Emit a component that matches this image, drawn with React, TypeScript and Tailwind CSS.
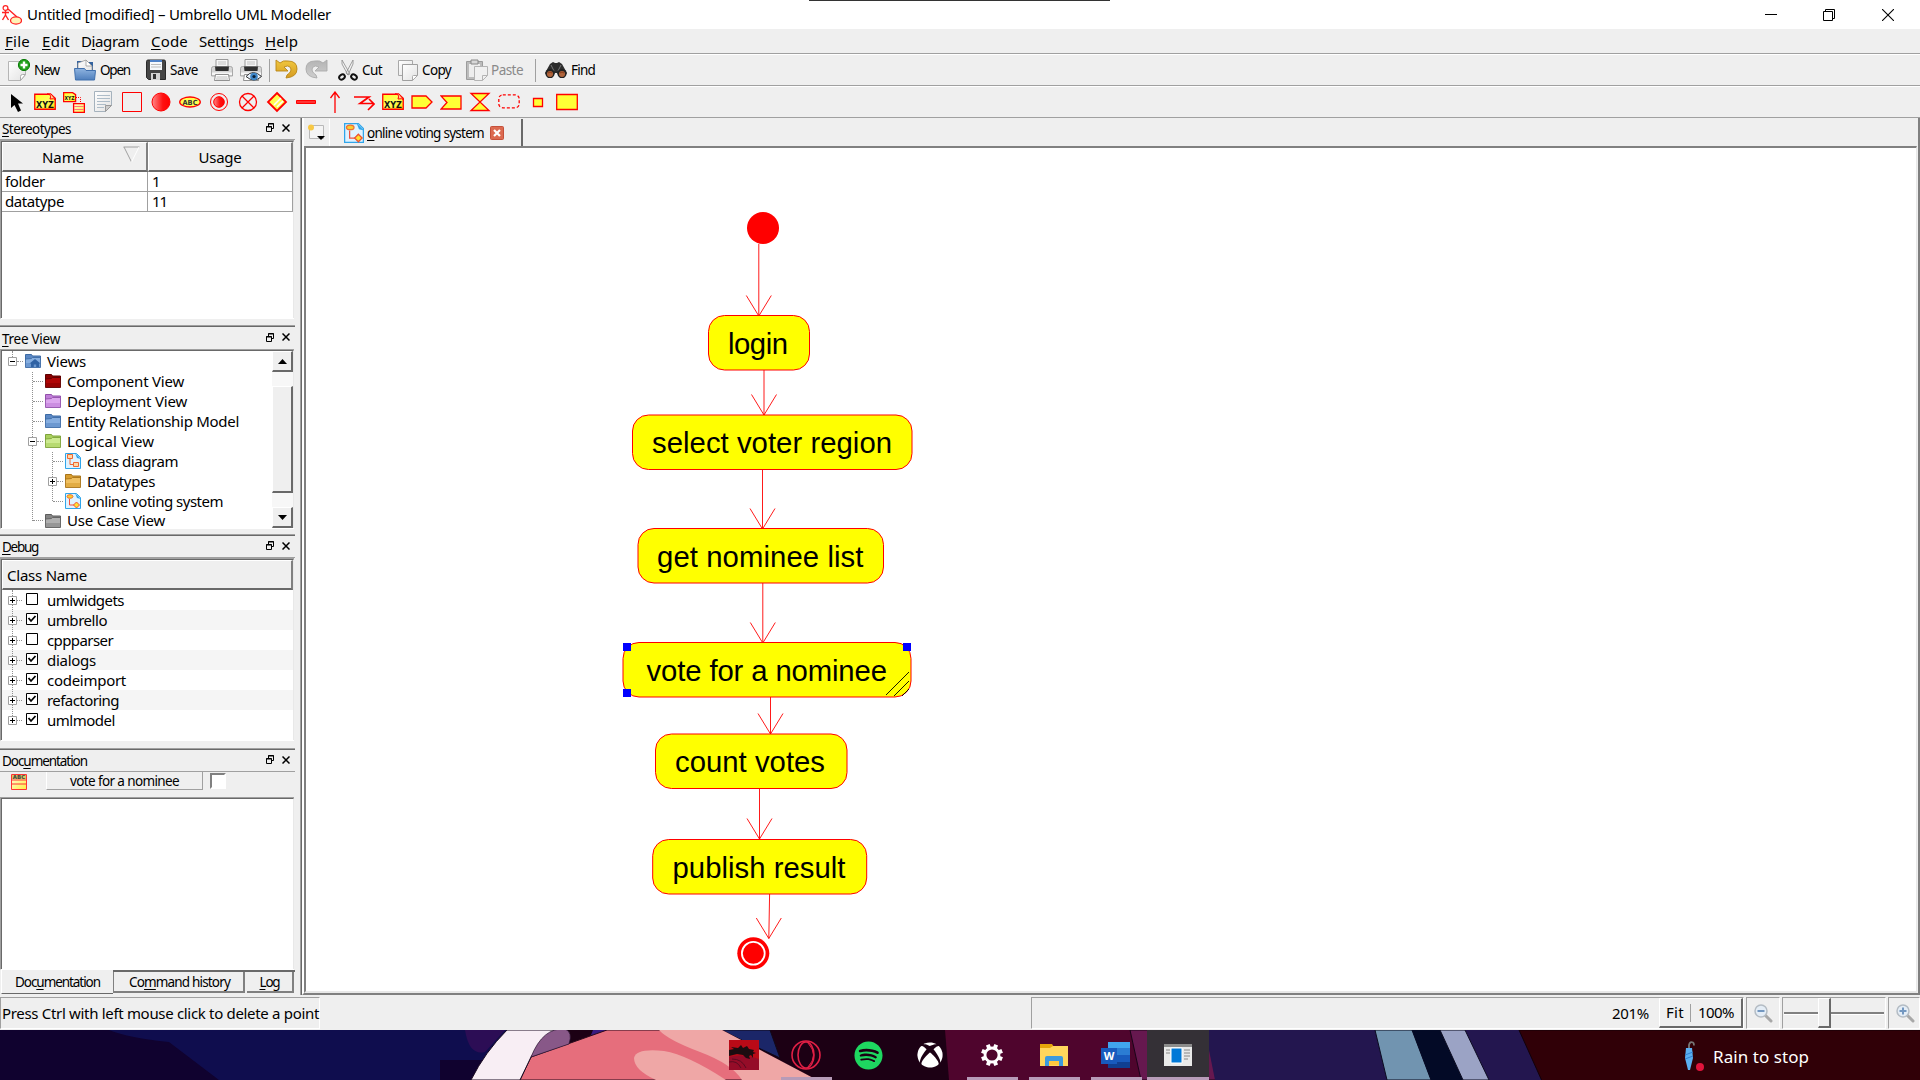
import React, { useLayoutEffect, useRef, useState } from "react";
import { FaSpotify, FaXbox } from "react-icons/fa";

const UI = "font-['Noto_Sans',sans-serif]";

/** Text whose tracking is adjusted so that it fills exactly `w` pixels. `u` is the index of the mnemonic letter. */
function Fit({ t, w, u = -1, c = "" }: { t: string; w: number; u?: number; c?: string }) {
  const ref = useRef<HTMLSpanElement>(null);
  const [ls, setLs] = useState(0);
  useLayoutEffect(() => {
    const el = ref.current;
    if (el && ls === 0) setLs((w - el.getBoundingClientRect().width) / t.length);
  }, []);
  return (
    <span ref={ref} className={"inline-block whitespace-pre " + c} style={{ letterSpacing: ls }}>
      {u < 0 ? t : (<>{t.slice(0, u)}<span className="underline underline-offset-2 decoration-1">{t[u]}</span>{t.slice(u + 1)}</>)}
    </span>
  );
}

const Svg = ({ s = 22, h, vb, children, c = "" }: { s?: number; h?: number; vb?: string; children: React.ReactNode; c?: string }) => (
  <svg width={s} height={h ?? s} viewBox={vb ?? "0 0 22 22"} className={"block shrink-0 " + c} fill="none">{children}</svg>
);

const Gradients = () => (
  <svg width="0" height="0" className="absolute">
    <defs>
      <linearGradient id="paper" x1="0" y1="0" x2="1" y2="1"><stop offset="0" stopColor="#fff" /><stop offset="1" stopColor="#e2e2e2" /></linearGradient>
      <linearGradient id="blue" x1="0" y1="0" x2="0" y2="1"><stop offset="0" stopColor="#8fb4e0" /><stop offset="1" stopColor="#4f7fbd" /></linearGradient>
      <linearGradient id="gold" x1="0" y1="0" x2="0" y2="1"><stop offset="0" stopColor="#f0c840" /><stop offset="1" stopColor="#d59a20" /></linearGradient>
      <linearGradient id="grey" x1="0" y1="0" x2="0" y2="1"><stop offset="0" stopColor="#b4b4b4" /><stop offset="1" stopColor="#cfcfcf" /></linearGradient>
      <linearGradient id="red" x1="0" y1="0" x2="1" y2="0"><stop offset="0" stopColor="#ff8a8a" /><stop offset=".6" stopColor="#ff1010" /><stop offset="1" stopColor="#f00" /></linearGradient>
      <linearGradient id="yel" x1="0" y1="0" x2="1" y2="1"><stop offset="0" stopColor="#ffff20" /><stop offset=".5" stopColor="#ffff60" /><stop offset="1" stopColor="#ffe000" /></linearGradient>
      <linearGradient id="cream" x1="0" y1="0" x2="1" y2="1"><stop offset="0" stopColor="#fffde0" /><stop offset="1" stopColor="#ffee40" /></linearGradient>
    </defs>
  </svg>
);

/* ---------- main toolbar icons ---------- */
const NewIcon = () => (
  <Svg><path d="M.5 2.500h17v13l-5 6H.5z" fill="url(#paper)" stroke="#b5b5b5" /><path d="M12.500 21.500v-4q0-2 2-2h3z" fill="#fff" stroke="#aaa" /><circle cx="16" cy="6" r="5.600" fill="#22a11c" stroke="#0c7d0a" /><path d="M16 2.500v7M12.500 6h7" stroke="#fff" strokeWidth="2.400" /></Svg>
);
const OpenIcon = () => (
  <Svg><path d="M3 2h5l1 1h10v12H3z" fill="#34639f" /><path d="M4 13V4l8-3 6 6v6z" fill="url(#paper)" stroke="#999" strokeWidth=".8" /><path d="M12 1v6h6z" fill="#fff" stroke="#999" strokeWidth=".8" /><path d="M.5 9.500h10l1.500 2h9.500l-1 9.500H1.500z" fill="url(#blue)" stroke="#4170ad" /></Svg>
);
const SaveIcon = () => (
  <Svg s={20} h={22} vb="0 0 20 22"><path d="M.5 2.500q0-1.500 1.500-1.500h16q1.500 0 1.500 1.500v18h-17l-2-2z" fill="#454545" stroke="#292929" /><path d="M4 1h12v10H4z" fill="#f5f8fc" /><path d="M4 1h12v2H4z" fill="#4c80c8" /><path d="M5 5.500h10M5 8h10" stroke="#bbb" /><path d="M5 14h9v7H5z" fill="#d5d5d5" /><path d="M7 15h3v5H7z" fill="#333" /></Svg>
);
const Printer = ({ eye = false }: { eye?: boolean }) => (
  <Svg><path d="M5 9V.5h12V9" fill="#f6f6f6" stroke="#999" /><path d="M7 3h8M7 5h8" stroke="#c2c2c2" /><path d="M.5 9.500q0-2 2-2h17q2 0 2 2V17H.5z" fill="#d4d4d4" stroke="#9a9a9a" strokeWidth=".8" /><path d="M4 7.500h14l-.5 4.500h-13z" fill="#303030" /><path d="M1 13.500h20v2.500H1z" fill="#f6f6f6" /><path d="M4.500 15.500h13l1 6h-15z" fill="#fff" stroke="#777" strokeWidth=".8" />
    {eye ? <><path d="M6 17.500q7-8 15.500 0-7.500 7-15.500 0z" fill="#e7f0fa" stroke="#333" /><circle cx="14" cy="17.500" r="3.800" fill="#3f86c6" /><circle cx="14" cy="17.500" r="1.600" fill="#0c1e33" /></> : <path d="M5.500 18h11M5 20h12" stroke="#bbb" />}
  </Svg>
);
const Undo = ({ redo = false }: { redo?: boolean }) => (
  <Svg s={23} h={22} vb="0 0 23 22" c={redo ? "-scale-x-100" : ""}>
    <path d="M1 1v11h12l-4-4q4-2 6 0 3 4-3 8l-1 3q11-1 11-9T13 2Q8 1 5 4z" fill={redo ? "url(#grey)" : "url(#gold)"} stroke={redo ? "#aaa" : "#b98717"} strokeWidth=".9" />
  </Svg>
);
const CutIcon = () => (
  <Svg s={20} h={22} vb="0 0 20 22"><path d="M4 1l8 14-2 1L4 5zM15 1L8 14l2 2 5-11z" fill="#f2f2f2" stroke="#8a8a8a" strokeWidth=".8" /><ellipse cx="4" cy="18" rx="3" ry="2.300" stroke="#111" strokeWidth="2" transform="rotate(-35 4 18)" /><ellipse cx="16" cy="18" rx="3" ry="2.300" stroke="#111" strokeWidth="2" transform="rotate(35 16 18)" /></Svg>
);
const CopyIcon = () => (
  <Svg s={20} h={22} vb="0 0 20 22"><path d="M.5 1.500h14v15H.5z" fill="url(#paper)" stroke="#a8a8a8" /><path d="M4.500 5.500h15v11l-5 5h-10z" fill="url(#paper)" stroke="#9f9f9f" /><path d="M14.500 21.500v-4q0-1 1-1h4z" fill="#fff" stroke="#aaa" /></Svg>
);
const PasteIcon = () => (
  <Svg><path d="M.5 2.500h16v18H.5z" fill="#bcbcbc" stroke="#9c9c9c" /><path d="M3 5h11v13H3z" fill="#ededed" /><path d="M5 1h7v4H5z" fill="#d8d8d8" stroke="#888" /><path d="M8.500 7.500h13v9l-5 5h-8z" fill="#f0f0f0" stroke="#b4b4b4" /><path d="M16.500 21.500v-5h5" stroke="#b4b4b4" /></Svg>
);
const FindIcon = () => (
  <Svg><path d="M5 5l3-2 2 1h2l2-1 3 2 5 9-3 5h-4l-3-5h-2l-3 5H3l-3-5z" fill="#2d2d2d" /><path d="M6 6l3 6M16 6l-3 6" stroke="#777" /><circle cx="5" cy="14.500" r="4.600" fill="#222" /><circle cx="17" cy="14.500" r="4.600" fill="#222" /><circle cx="5" cy="15" r="3" fill="#b0653c" /><circle cx="17" cy="15" r="3" fill="#b0653c" /><path d="M3 14q2-2 4 0M15 14q2-2 4 0" stroke="#8a3a18" /></Svg>
);

const Xyz = () => (
  <Svg><path d="M.75 3.250h16l4.500 4v11H.75z" fill="url(#yel)" stroke="#f00" strokeWidth="1.300" /><path d="M13 3q5 0 3 5 4-1 6 1l-5-6z" fill="#ffd090" stroke="#f00" /><text x="11" y="17" textAnchor="middle" fontFamily="DejaVu Sans" fontWeight="700" fontSize="8.500" textLength="18" lengthAdjust="spacingAndGlyphs" fill="#111">XYZ</text></Svg>
);
const R = { stroke: "#f00", strokeWidth: 1.3 };
const toolIcons: React.ReactNode[] = [
  <Svg c="translate-x-px"><path d="M5 3v14l3.500-3 3.500 7 3-1.500-3-7h5z" fill="#000" /></Svg>,
  <Xyz />,
  <Svg><path d="M.6 1.600h9l3 2v7H.6z" fill="url(#yel)" {...R} /><text x="6.500" y="9" textAnchor="middle" fontFamily="DejaVu Sans" fontWeight="700" fontSize="5.500" textLength="10" lengthAdjust="spacingAndGlyphs" fill="#111">XYZ</text><path d="M13 6.500h4.500V12" stroke="#f00" strokeDasharray="1 1" /><path d="M10.600 12.600h10.800v8.800H10.600z" fill="url(#cream)" {...R} /><path d="M11 15.500h10M11 18.500h10" stroke="#f77" /></Svg>,
  <Svg><path d="M2.500.5h17v14l-6 6h-11z" fill="url(#paper)" stroke="#a5b2bd" /><path d="M5 4.500h13M5 7.500h13M5 10.500h13M5 13.500h9M5 16.500h7" stroke="#adbcc8" /><path d="M13.500 20.500v-6h6z" fill="#ccc" stroke="#999" /></Svg>,
  <Svg><path d="M1.500 1.500h19v19h-19z" stroke="#f00" /></Svg>,
  <Svg><circle cx="11" cy="11" r="9" fill="url(#red)" stroke="#f00" /></Svg>,
  <Svg><ellipse cx="11" cy="11" rx="10.300" ry="5" fill="#ffff50" {...R} /><text x="11" y="13.800" textAnchor="middle" fontFamily="DejaVu Sans" fontWeight="700" fontSize="7" textLength="15" lengthAdjust="spacingAndGlyphs" fill="#333">ABC</text></Svg>,
  <Svg><circle cx="11" cy="11" r="8.500" stroke="#f00" /><circle cx="11" cy="11" r="5.300" fill="url(#red)" stroke="#f00" /></Svg>,
  <Svg><circle cx="11" cy="11" r="8.500" {...R} /><path d="M5 5l12 12M17 5L5 17" {...R} /></Svg>,
  <Svg><path d="M11 2l9 9-9 9-9-9z" fill="url(#yel)" {...R} strokeWidth={1.800} /><path d="M8 14l7-7M11 16l6-6" stroke="#fff" strokeWidth="1.500" /></Svg>,
  <Svg><path d="M1.500 9.500h19v3h-19z" fill="#f33" stroke="#f00" /></Svg>,
  <Svg><path d="M11 22V2M6.500 7L11 1l4.500 6" {...R} /></Svg>,
  <Svg><path d="M1 6h15l-9 6.500h14M16 8l5 5-6 6" stroke="#f00" strokeWidth="1.700" /></Svg>,
  <Xyz />,
  <Svg><path d="M1 5h14l6 6-6 6H1z" fill="#ffff35" {...R} /></Svg>,
  <Svg><path d="M1 5h20v13H1l6-6.500z" fill="#ffff35" {...R} /></Svg>,
  <Svg><path d="M2 2.500h18L2 19.500h18z" fill="#ffff35" {...R} /></Svg>,
  <Svg><rect x=".8" y="3.800" width="20.400" height="13" rx="4" {...R} strokeDasharray="3 2" /></Svg>,
  <Svg><path d="M6.500 7.500h9v8h-9z" fill="#ffff35" {...R} /></Svg>,
  <Svg><path d="M.7 3.500h20.600v15H.7z" fill="#ffff35" {...R} /></Svg>,
];

/* ---------- tree icons ---------- */
const folderColors = {
  blue: ["#3d6ba5", "#86aee0", "#5b88c4"], red: ["#5d0000", "#b00505", "#8b0000"], purple: ["#9250ab", "#dca6ee", "#c07ed8"],
  green: ["#7ea33b", "#cdea90", "#a9cf5d"], gold: ["#a8741a", "#f0c060", "#d99e30"], grey: ["#5d5d5d", "#b0b0b0", "#858585"],
};
type FolderColor = keyof typeof folderColors;
const Folder = ({ k, home }: { k: FolderColor; home?: boolean }) => {
  const [d, l, m] = folderColors[k];
  return (
    <Svg s={16} vb="0 0 16 16"><path d="M.5 1.500h6l1 1.500h8v4H.5z" fill={m} stroke={d} /><path d="M.5 14.500V6l6-.5 1-1h8v10z" fill={l} stroke={d} strokeWidth=".9" /><path d="M1 10h14v4H1z" fill={m} opacity=".6" />{home && <path d="M10 6l-5.500 4.500H6V14h2.800v-2.500h2.400V14H14v-3.500h1.500z" fill="#2f62a4" />}</Svg>
  );
};
const DiagramIcon = ({ s = 16, activity = false }: { s?: number; activity?: boolean }) => (
  <Svg s={s} vb="0 0 16 16"><path d="M.5.5h11l4 4v11H.5z" fill="#dff2ff" stroke="#2fa5ea" /><path d="M10 0l6 6-4-1z" fill="#2fa5ea" />
    {activity ? <><ellipse cx="5" cy="3.500" rx="3" ry="1.800" fill="#f8d030" stroke="#f07030" /><path d="M4.500 6v6H9" stroke="#f05040" /><path d="M11.500 9l3 3-3 3-3-3z" fill="#ffe030" stroke="#f05030" /></> : <><path d="M2.500 1.500h5v4h-5zM8.500 9.500h5v4h-5z" fill="#ffd9a8" stroke="#f06830" /><path d="M5 6v5.500h3" stroke="#f06830" /></>}
  </Svg>
);

/* ---------- dock pieces ---------- */
function Dock({ title, w, u, h, titleH, children }: { title: string; w: number; u: number; h: string; titleH: string; children: React.ReactNode }) {
  return (
    <section className={"flex w-[295px] flex-col " + h}>
      <div className={"flex shrink-0 items-center justify-between pl-[2px] pr-[5px] text-[13.5px] leading-none " + titleH}>
        <Fit t={title} w={w} u={u} c="mt-[3px]" />
        <span className="flex items-center gap-2 pb-[2px]">
          <Svg s={8} h={9} vb="0 0 8 9"><path d="M2.500 3V.5h5v5H6M2 1h6M.5 3.500h5v5h-5zM0 4h6" stroke="#000" /></Svg>
          <Svg s={8} h={8} vb="0 0 8 8"><path d="M.5.5l7 7M7.500.5l-7 7" stroke="#000" strokeWidth="1.500" /></Svg>
        </span>
      </div>
      {children}
    </section>
  );
}
const Frame = ({ h, children }: { h: string; children?: React.ReactNode }) => (
  <div className={"w-[294px] shrink-0 border-l border-t border-[#a0a0a0] border-b border-b-white " + h}>
    <div className="h-full w-[293px] overflow-hidden border-l border-t border-[#696969] border-r border-r-[#e8e8e8] bg-white">{children}</div>
  </div>
);
const DockEnd = () => <div className="mt-auto h-[2px] border-t border-[#a0a0a0] bg-[#696969]" />;
const Head = "border-l border-t border-b-2 border-r-2 border-l-white border-t-white border-b-[#696969] border-r-[#808080] bg-[#efefef]";

const Expander = ({ open }: { open: boolean }) => (
  <Svg s={9} vb="0 0 9 9"><path d="M.5.5h8v8h-8z" fill="#fff" stroke="#a0a0a0" /><path d={open ? "M2 4.500h5" : "M2 4.500h5M4.500 2v5"} stroke="#000" /></Svg>
);
const Dots = ({ c }: { c: string }) => <span className={"border-t border-dotted border-[#909090] " + c} />;

type Row = { l: number; t: string; w: number; ex?: boolean; icon: React.ReactNode };
const tree: Row[] = [
  { l: 0, t: "Views", w: 39, ex: true, icon: <Folder k="blue" home /> },
  { l: 1, t: "Component View", w: 117, icon: <Folder k="red" /> },
  { l: 1, t: "Deployment View", w: 120, icon: <Folder k="purple" /> },
  { l: 1, t: "Entity Relationship Model", w: 172, icon: <Folder k="blue" /> },
  { l: 1, t: "Logical View", w: 87, ex: true, icon: <Folder k="green" /> },
  { l: 2, t: "class diagram", w: 91, icon: <DiagramIcon /> },
  { l: 2, t: "Datatypes", w: 68, ex: false, icon: <Folder k="gold" /> },
  { l: 2, t: "online voting system", w: 136, icon: <DiagramIcon activity /> },
  { l: 1, t: "Use Case View", w: 98, icon: <Folder k="grey" /> },
];
const indent = ["pl-[6px]", "pl-[26px]", "pl-[46px]"];

const debugRows: [string, number, boolean][] = [
  ["umlwidgets", 77, false], ["umbrello", 60, true], ["cppparser", 66, false], ["dialogs", 49, true], ["codeimport", 79, true], ["refactoring", 72, true], ["umlmodel", 68, true],
];

const Raised = "border border-l-white border-t-white border-b-[#696969] border-r-[#696969] bg-[#efefef]";

function ScrollBar() {
  return (
    <div className="flex w-[21px] flex-col bg-[#f7f7f7]">
      <div className={"flex h-[21px] items-center justify-center border-b-2 border-r-2 " + Raised}><Svg s={9} h={5} vb="0 0 9 5"><path d="M0 5l4.500-5L9 5z" fill="#000" /></Svg></div>
      <div className="h-[14px]" />
      <div className={"h-[107px] border-b-2 border-r-2 " + Raised} />
      <div className="flex-1" />
      <div className={"flex h-[21px] items-center justify-center border-b-2 border-r-2 " + Raised}><Svg s={9} h={5} vb="0 0 9 5"><path d="M0 0l4.500 5L9 0z" fill="#000" /></Svg></div>
    </div>
  );
}

function LeftDocks() {
  return (
    <div className="flex w-[300px] flex-col">
      <Dock title="Stereotypes" w={69} u={0} h="h-[209px]" titleH="h-[21px]">
        <div className="h-px bg-[#a0a0a0]" />
        <Frame h="h-[179px]">
          <div className="flex h-[30px] text-[15px] leading-none">
            <div className={"flex w-[146px] items-center pl-[39px] " + Head}><Fit t="Name" w={42} c="mt-[2px]" /><Svg s={17} h={17} vb="0 0 17 17" c="ml-[39px] mb-[5px]"><path d="M.5 1h16M1 1l7.500 15" stroke="#a0a0a0" /><path d="M16 1L8.500 16" stroke="#fff" /></Svg></div>
            <div className={"flex flex-1 items-center justify-center " + Head}><Fit t="Usage" w={43} c="mt-[2px]" /></div>
          </div>
          {[["folder", 40, "1", 7], ["datatype", 59, "11", 15]].map(([a, w, b, w2]) => (
            <div key={a} className="flex h-5 items-center text-[15px] leading-none">
              <div className="flex h-full w-[146px] items-center border-b border-r border-[#a0a0a0] pl-[3px]"><Fit t={a as string} w={w as number} /></div>
              <div className="flex h-full flex-1 items-center border-b border-r border-[#a0a0a0] pl-[4px]"><Fit t={b as string} w={w2 as number} /></div>
            </div>
          ))}
        </Frame>
        <DockEnd />
      </Dock>

      <Dock title="Tree View" w={58} u={0} h="h-[209px]" titleH="h-[22px]">
        <Frame h="h-[180px]">
          <div className="flex h-full justify-between">
            <div className="relative">
              <span className="absolute left-[10px] top-0 h-[6px] border-l border-dotted border-[#909090]" />
              <span className="absolute left-[30px] top-[21px] h-[149px] border-l border-dotted border-[#909090]" />
              <span className="absolute left-[50px] top-[101px] h-[49px] border-l border-dotted border-[#909090]" />
              {tree.map((r, i) => (
                <div key={r.t} className={"relative flex items-center " + (i === 8 ? "h-[17px] pt-[2px] " : "h-5 ") + indent[r.l]}>
                  {r.ex === undefined ? <Dots c="ml-[5px] w-[10px]" /> : <><Expander open={r.ex} /><Dots c="w-[6px]" /></>}
                  <span className="ml-[2px] mr-[6px]">{r.icon}</span>
                  <span className="text-[15px] leading-none"><Fit t={r.t} w={r.w} /></span>
                </div>
              ))}
            </div>
            <ScrollBar />
          </div>
        </Frame>
        <DockEnd />
      </Dock>

      <Dock title="Debug" w={36} u={0} h="h-[214px]" titleH="h-[21px]">
        <div className="h-px bg-[#a0a0a0]" />
        <Frame h="h-[183px]">
          <div className={"flex h-[30px] items-center pl-[4px] text-[15px] leading-none " + Head}><Fit t="Class Name" w={80} c="mt-[2px]" /></div>
          <div className="relative">
            <span className="absolute left-[10px] top-0 h-[130px] border-l border-dotted border-[#909090]" />
            {debugRows.map(([t, w, on]) => (
              <div key={t} className="flex h-5 items-center pl-[6px] odd:bg-[#f5f5f5]">
                <span className="relative"><Expander open={false} /></span><Dots c="w-[5px]" />
                <Svg s={12} vb="0 0 12 12" c="ml-[4px] mb-[3px]"><path d="M.5.5h11v11H.5z" fill="#fff" stroke="#000" />{on && <path d="M2.500 5l2.500 3 4.500-5" stroke="#000" strokeWidth="1.800" />}</Svg>
                <span className="ml-[9px] text-[15px] leading-none"><Fit t={t} w={w} /></span>
              </div>
            ))}
          </div>
        </Frame>
        <DockEnd />
      </Dock>

      <Dock title="Documentation" w={85} u={3} h="h-[245px]" titleH="h-[21px]">
        <div className="flex h-[26px] border-t border-[#a0a0a0]">
          <Svg s={16} vb="0 0 16 16" c="ml-[11px] mt-[2px]"><path d="M.5.500h15v15H.5z" fill="url(#cream)" stroke="#f33" /><path d="M1 1h14v4H1z" fill="#d8c860" /><path d="M0 6h16M0 10h16" stroke="#f33" /><text x="8" y="5" fontSize="5.500" fontWeight="700" fontFamily="DejaVu Sans" textAnchor="middle" fill="#444">ABC</text></Svg>
          <div className="ml-[19px] flex h-[18px] w-[157px] items-center justify-center border-b border-r border-l border-[#a0a0a0] border-l-white pt-[2px] text-[13.5px] leading-none"><Fit t="vote for a nominee" w={109} /></div>
          <div className="ml-[7px] mt-[1px] h-[16px] w-[16px] border-2 border-b-white border-l-[#808080] border-r-white border-t-[#808080] bg-white" />
        </div>
        <Frame h="h-[173px]" />
        <div className="flex h-[25px] items-start border-[#a0a0a0] text-[13.5px] leading-none">
          <div className="ml-px flex h-[24px] w-[112px] items-center justify-center border-b border-[#696969] border-l border-l-white pt-[3px]"><Fit t="Documentation" w={85} u={3} /></div>
          <div className="flex h-[23px] flex-1 border-t-2 border-[#696969]">
            <div className="flex w-[132px] items-center justify-center border-b-2 border-l border-r-2 border-[#808080] pl-[2px] pt-[2px]"><Fit t="Command history" w={101} u={2} /></div>
            <div className="ml-[2px] flex w-[47px] items-center justify-center border-b-2 border-r-2 border-[#808080] pt-[2px]"><Fit t="Log" w={20} u={0} /></div>
          </div>
        </div>
      </Dock>
    </div>
  );
}

/* ---------- diagram ---------- */
const nodes = [
  { t: "login", x: 708.5, y: 315.500, w: 101, tx: 728, tw: 60, b: 353.7 },
  { t: "select voter region", x: 632.5, y: 415, w: 279.5, tx: 652, tw: 240, b: 452.7 },
  { t: "get nominee list", x: 638, y: 528.500, w: 245.5, tx: 657, tw: 206.5, b: 566.5 },
  { t: "vote for a nominee", x: 623, y: 642.500, w: 288, tx: 646.5, tw: 240.5, b: 680.7 },
  { t: "count votes", x: 655.5, y: 734, w: 191.5, tx: 675, tw: 150, b: 771.7 },
  { t: "publish result", x: 652.7, y: 839.500, w: 214, tx: 672.5, tw: 173, b: 877.7 },
];
const arrows: [number, number, number, number][] = [
  [758.8, 244, 758.8, 316], [764, 370, 764, 415], [762.5, 469.5, 762.5, 529], [762.8, 583, 762.8, 643], [770.5, 697, 770.5, 734], [759.5, 788.5, 759.5, 839], [769.6, 894, 768.8, 938.5],
];

const Canvas = () => (
  <svg width="1610" height="843" viewBox="306 148 1610 843" className="block" fill="none">
    <circle cx="763" cy="228" r="16" fill="#f00" />
    {nodes.map((n) => (
      <g key={n.t}>
        <rect x={n.x} y={n.y} width={n.w} height="54.500" rx="16" fill="#ff0" stroke="#f00" />
        <text x={n.tx} y={n.b} textLength={n.tw} fontFamily="Liberation Sans, Arial, sans-serif" fontSize="29.300" fill="#000">{n.t}</text>
      </g>
    ))}
    {arrows.map(([a, b, c, d]) => <path key={b} d={`M${a} ${b}L${c} ${d}M${c - 12.5} ${d - 20.5}L${c} ${d}l12.500 -20.500`} stroke="#f00" strokeWidth=".9" />)}
    <path d="M886 695l23-23M894 696l15-15M902 696l7-7" stroke="#000" strokeWidth=".9" />
    <path d="M623 643h8v8h-8zM903 643h8v8h-8zM623 689h8v8h-8z" fill="#00f" />
    <circle cx="753.300" cy="953.300" r="16" fill="#f00" /><circle cx="753.300" cy="953.300" r="11.400" stroke="#fff" strokeWidth="1.800" />
  </svg>
);

/* ---------- status bar ---------- */
const Sunken = "border border-l-[#a0a0a0] border-t-[#a0a0a0] border-b-white border-r-white";
const Magnifier = ({ plus }: { plus?: boolean }) => (
  <Svg s={20} vb="0 0 20 20"><path d="M12 12l6 6" stroke="#a8a8a8" strokeWidth="3" strokeLinecap="round" /><circle cx="8" cy="8" r="6" fill="#e4edf6" stroke="#b4bcc4" strokeWidth="1.500" /><path d={plus ? "M4.500 8h7M8 4.500v7" : "M4.500 8h7"} stroke="#7397c0" strokeWidth="2" /></Svg>
);
const StatusBar = () => (
  <div className="flex h-[35px] bg-[#efefef] pt-[2px] text-[15px] leading-none">
    <div className={"flex h-[32px] w-[320px] items-center pl-px " + Sunken}><Fit t="Press Ctrl with left mouse click to delete a point" w={317} /></div>
    <div className={"ml-[711px] flex h-[32px] w-[713px] items-center justify-end " + Sunken}>
      <span className="mr-[10px]"><Fit t="201%" w={37} /></span>
      <div className={"flex h-[30px] w-[84px] items-center border-b-2 border-r-2 pl-[6px] " + Raised}><Fit t="Fit" w={18} /><span className="ml-[6px] mr-[7px] h-[18px] border-l border-[#a0a0a0]" /><Fit t="100%" w={36} /></div>
    </div>
    <div className={"ml-[2px] flex h-[32px] w-[34px] items-center justify-center " + Sunken}><Magnifier /></div>
    <div className={"ml-[2px] flex h-[32px] w-[104px] items-center px-px " + Sunken}>
      <span className="h-[3px] w-[34px] border-b border-t-2 border-b-white border-t-[#808080]" />
      <span className={"h-[30px] w-[13px] border-b-2 border-r-2 " + Raised} />
      <span className="h-[3px] flex-1 border-b border-t-2 border-b-white border-t-[#808080]" />
    </div>
    <div className={"ml-[2px] flex h-[32px] flex-1 items-center justify-center pl-px " + Sunken}><Magnifier plus /></div>
  </div>
);

/* ---------- taskbar ---------- */
const Wallpaper = () => (
  <svg width="1920" height="50" viewBox="0 1030 1920 50" className="col-start-1 row-start-1 block">
    <path d="M0 1030h600v50H0z" fill="#0f0d4e" /><path d="M0 1030h109q20 8 60 12l50 38H0z" fill="#10022f" />
    <path d="M440 1060h60v20h-60z" fill="#10022f" /><path d="M465 1030h40l-20 22q-16 4-20-22z" fill="#2c0d55" />
    <path d="M560 1030h420v50H560z" fill="#1c0014" /><path d="M593 1030h16l-20 10z" fill="#3a1a80" />
    <path d="M720 1030h50l10 28z" fill="#1b2668" stroke="#120818" />
    <path d="M531 1057l76-27h115l95 50H520z" fill="#e66e7c" stroke="#2a0a1c" />
    <path d="M659 1030h63l95 50h-75q-10-16-42-28t-41-22z" fill="#efa7a6" />
    <path d="M656 1080q-22-10-22-22 2-10 30-7 24 4 62 29z" fill="#efa7a6" />
    <path d="M507 1030q-22 22-36 50h49l11-23q14-22 30-27z" fill="#f8eef4" stroke="#1a0a20" />
    <path d="M531 1057q12-30 34-28 8 3 4 15z" fill="#885888" stroke="#2a1430" strokeWidth=".7" />
    <path d="M945 1030h190l10 50H949z" fill="#4f052d" /><path d="M1130 1030h90v50h-79z" fill="#66184f" stroke="#1a0418" />
    <path d="M1205 1030h345v50h-335z" fill="#23164f" />
    <path d="M1375 1030h37l19 50h-44z" fill="#7194b0" stroke="#0c0c20" /><path d="M1412 1030h28l23 50h-32z" fill="#030a26" /><path d="M1440 1030h25l24 50h-26z" fill="#9ba3c5" stroke="#0c0c20" />
    <path d="M1519 1030h402v51h-379z" fill="#300007" stroke="#120008" />
  </svg>
);
const Gear = () => (
  <Svg s={24} vb="-12 -12 24 24"><circle r="7" stroke="#fff" strokeWidth="2.800" />{[22.5, 67.5, 112.5, 157.5, 202.5, 247.5, 292.5, 337.5].map((a) => <path key={a} d="M-2-11h4v4h-4z" fill="#fff" transform={`rotate(${a})`} />)}</Svg>
);
const tasks: { icon: React.ReactNode; bar?: boolean; active?: boolean }[] = [
  { icon: <Svg s={30} vb="0 0 30 30"><path d="M0 0h30v30H0z" fill="#b90a17" /><path d="M0 17q12-4 30 2v11H0z" fill="#950c28" /><path d="M0 10l5-1-3-2 7 1 3-3 2 3 4-2 2 3 5 1-1 2 3 1-3 1v4l-2-3-2 1 1 3-4-1-3-3-6-1-8 2z" fill="#1c0c10" /><path d="M0 22q8-2 12 6M3 19q10 0 14 9" stroke="#5a0a20" /></Svg> },
  { icon: <Svg s={30} vb="0 0 30 30"><circle cx="15" cy="15" r="14" stroke="#e01f45" strokeWidth="1.600" /><ellipse cx="15" cy="15" rx="8" ry="13" stroke="#e01f45" strokeWidth="1.600" /><path d="M17 3q11 12 0 24" stroke="#e01f45" strokeWidth="1" /></Svg>, bar: true },
  { icon: <FaSpotify size={29} color="#1ed760" /> },
  { icon: <FaXbox size={26} color="#fff" /> },
  { icon: <Gear />, bar: true },
  { icon: <Svg s={28} h={24} vb="0 0 28 24"><path d="M0 1h12l2 3h-2v6H0z" fill="#e5a50a" /><path d="M0 5h10l3-2h15v20H0z" fill="#ffd65c" /><path d="M5 23V15q0-2 2-2h14q2 0 2 2v8h-4v-5H9v5z" fill="#3c9add" /><path d="M9 18h10v4H9z" fill="#ffc83d" /></Svg>, bar: true },
  { icon: <Svg s={30} h={28} vb="0 0 30 28"><path d="M7 1h22v7H7z" fill="#41a5ee" /><path d="M7 7h22v7H7z" fill="#2b7cd3" /><path d="M7 14h22v7H7z" fill="#185abd" /><path d="M7 21h22v6H7z" fill="#103f91" /><path d="M0 7h16v16H0z" fill="#185abd" /><text x="8" y="19" textAnchor="middle" fontFamily="Open Sans" fontWeight="700" fontSize="11" fill="#fff">W</text></Svg>, bar: true },
  { icon: <Svg s={28} h={22} vb="0 0 28 22"><path d="M0 0h28v22H0z" fill="#e9e9e9" /><path d="M0 0h28v3H0z" fill="#8b8b8b" /><path d="M7 4h11v15H7z" fill="#0078d7" stroke="#fff" /><path d="M2 6h4M2 9h4M20 6h6M20 9h6M20 12h6M20 15h4" stroke="#888" /></Svg>, bar: true, active: true },
];
const Taskbar = () => (
  <div className="grid h-[50px] grid-cols-1 overflow-hidden">
    <Wallpaper />
    <div className="z-10 col-start-1 row-start-1 flex pl-[713px]">
      {tasks.map((t, i) => (
        <div key={i} className={"flex h-[50px] w-[62px] flex-col items-center " + (t.active ? "bg-[#343036]" : "")}>
          <div className="flex flex-1 items-center pt-[3px]">{t.icon}</div>
          <div className={"h-[3px] " + (t.bar ? "bg-[#b79bb8] " : "") + (t.active ? "w-full" : "w-[51px]")} />
        </div>
      ))}
      <div className="ml-[474px] flex items-center pt-[2px] text-[17px] text-white">
        <Svg s={22} h={30} vb="0 0 22 30"><path d="M6 9V4q1-4 4-2.500 1 .5 1 3" stroke="#777" strokeWidth="1.800" /><path d="M3 7h6l1 10-3 12H5L2 17z" fill="#5aaef0" /><path d="M2 14l8-3M2 18l8-3" stroke="#2f7fd0" /><circle cx="17" cy="26" r="4" fill="#e0143c" /></Svg>
        <span className="ml-[8px] mt-px"><Fit t="Rain to stop" w={96} /></span>
      </div>
    </div>
  </div>
);

/* ---------- bars on top ---------- */
const menus: [string, number, number, string][] = [["File", 25, 0, "ml-[5px]"], ["Edit", 28, 0, "ml-[12px]"], ["Diagram", 58, 1, "ml-[11px]"], ["Code", 37, 0, "ml-[12px]"], ["Settings", 55, 5, "ml-[11px]"], ["Help", 33, 0, "ml-[11px]"]];

const Tool = ({ icon, t, w, c, gap = "ml-[4px]", tc = "" }: { icon: React.ReactNode; t?: string; w?: number; c: string; gap?: string; tc?: string }) => (
  <div className={"flex shrink-0 items-center " + c}>{icon}{t && <span className={gap + " mt-[2px] " + tc}><Fit t={t} w={w!} /></span>}</div>
);

export default function App() {
  return (
    <div className={"flex h-[1080px] w-[1920px] flex-col overflow-hidden bg-[#efefef] text-black " + UI}>
      <Gradients />
      <header className="flex h-[29px] shrink-0 justify-between bg-white">
        <div className="flex items-center gap-[5px] pl-[2px] text-[15px] leading-none">
          <Svg s={20} vb="0 0 20 20"><circle cx="3.500" cy="3" r="2.400" stroke="#f22" strokeWidth="1.200" /><path d="M3.500 5.500v5M0 7.500h7M3.500 10l-3 5M3.500 10l3 5M6 4l9 8" stroke="#f22" strokeWidth="1.400" /><ellipse cx="14" cy="15.500" rx="5.500" ry="3.600" fill="#fff3b8" stroke="#f22" strokeWidth="1.300" /></Svg>
          <Fit t="Untitled [modified] – Umbrello UML Modeller" w={304} />
        </div>
        <div className="ml-[478px] h-px w-[301px] bg-[#333]" />
        <div className="ml-auto flex items-center pr-[26px]">
          <Svg s={12} vb="0 0 12 12"><path d="M0 5.500h12" stroke="#000" /></Svg>
          <Svg s={12} vb="0 0 12 12" c="ml-[46px]"><path d="M.5 2.500h9v9h-9zM2.500 2V.5h9v9H10" stroke="#000" /></Svg>
          <Svg s={12} vb="0 0 12 12" c="ml-[47px]"><path d="M0 0l12 12M12 0L0 12" stroke="#000" strokeWidth="1.100" /></Svg>
        </div>
      </header>

      <nav className="flex h-[25px] shrink-0 items-center border-b border-[#a0a0a0] text-[15px] leading-none">
        {menus.map(([t, w, u, c]) => <span key={t} className={c}><Fit t={t} w={w} u={u} /></span>)}
      </nav>

      <div className="flex h-[32px] shrink-0 items-center border-b border-t border-b-[#a0a0a0] border-t-white text-[13.5px] leading-none">
        <Tool icon={<NewIcon />} t="New" w={25} c="ml-[8px] w-[66px]" />
        <Tool icon={<OpenIcon />} t="Open" w={30} c="w-[72px]" gap="ml-[4px]" />
        <Tool icon={<SaveIcon />} t="Save" w={28} c="w-[65px]" />
        <Tool icon={<Printer />} c="w-[29px]" />
        <Tool icon={<Printer eye />} c="w-[29px]" />
        <div className="h-[23px] w-[6px] border-l border-[#a0a0a0]" />
        <Tool icon={<Undo />} c="w-[30px]" />
        <Tool icon={<Undo redo />} c="w-[33px]" />
        <Tool icon={<CutIcon />} t="Cut" w={20} c="w-[60px]" />
        <Tool icon={<CopyIcon />} t="Copy" w={29} c="w-[68px]" />
        <Tool icon={<PasteIcon />} t="Paste" w={32} c="w-[69px]" gap="ml-[3px]" tc="text-[#8a8a8a]" />
        <div className="h-[23px] w-[10px] border-l border-[#a0a0a0]" />
        <Tool icon={<FindIcon />} t="Find" w={24} c="" gap="ml-[4px]" />
      </div>

      <div className="flex h-[32px] shrink-0 items-center border-b border-t border-b-[#a0a0a0] border-t-white pl-[1px]">
        {toolIcons.map((ic, i) => <div key={i} className="flex w-[29px] justify-center">{ic}</div>)}
      </div>

      <main className="flex h-[877px] shrink-0">
        <LeftDocks />
        <div className="w-[2px] border-l border-[#a0a0a0] bg-[#696969]" />
        <div className="flex flex-1 flex-col border-b-2 border-l-2 border-r-2 border-[#808080] border-l-white">
          <div className="flex h-[28px] items-stretch text-[13.5px] leading-none">
            <div className="flex w-[25px] items-center pl-[3px]"><Svg s={19} h={18} vb="0 0 19 18"><path d="M2.500 2.500h14v13h-14z" fill="#f4f4f4" stroke="#b8b8b8" /><circle cx="4" cy="4.500" r="3" fill="#f7c845" /><path d="M10 13h8l-4 4z" fill="#000" /></Svg></div>
            <div className="mt-px flex w-[194px] items-center border-l border-r-2 border-l-white border-r-[#696969] pl-[14px]"><DiagramIcon s={20} activity /><span className="ml-[3px] mt-[2px]"><Fit t="online voting system" w={117} u={0} /></span>
              <Svg s={14} vb="0 0 14 14" c="ml-[6px] mt-px"><rect x=".5" y=".5" width="13" height="13" rx="1" fill="#dc6a50" stroke="#c5503a" /><path d="M4 4l6 6M10 4l-6 6" stroke="#fff" strokeWidth="2.200" /></Svg>
            </div>
          </div>
          <div className="mr-px flex-1 overflow-hidden border-b-2 border-l-2 border-r border-t-2 border-[#808080] border-b-[#e8e8e8] border-r-[#e8e8e8] bg-white"><Canvas /></div>
        </div>
      </main>

      <StatusBar />
      <Taskbar />
    </div>
  );
}
